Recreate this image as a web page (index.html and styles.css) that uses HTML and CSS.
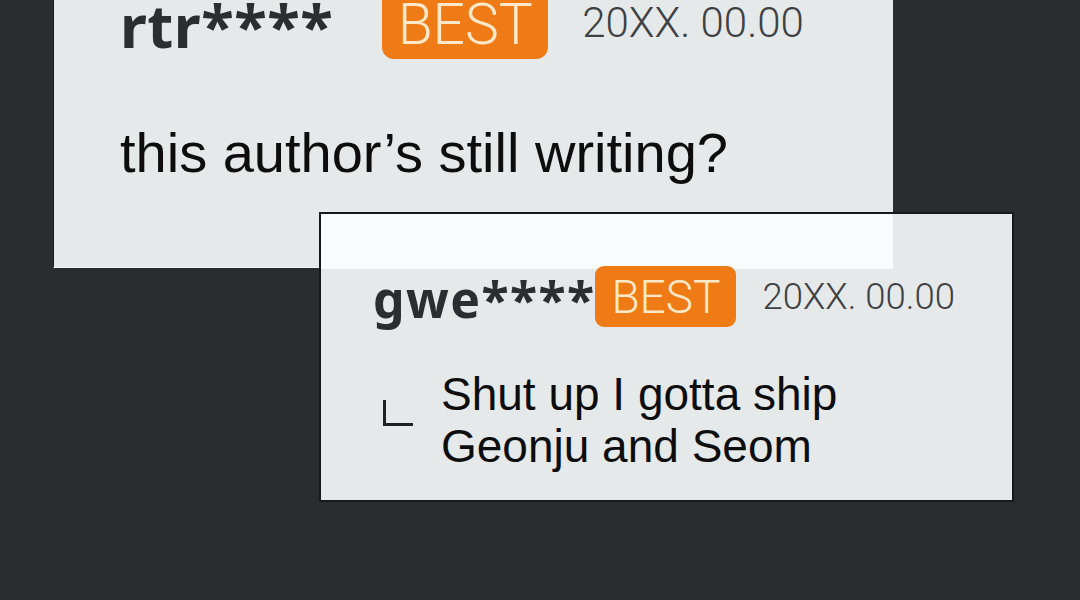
FILE: index.html
```html
<!DOCTYPE html>
<html lang="en">
<head>
<meta charset="utf-8">
<title>Comments</title>
<link rel="stylesheet" href="styles.css">
</head>
<body>
<main class="stage">
  <section class="card card-main">
    <div class="head">
      <span class="name name-lg">rtr****</span>
      <span class="badge badge-lg">BEST</span>
      <span class="date date-lg">20XX. 00.00</span>
    </div>
    <p class="comment">this author’s still writing?</p>
  </section>
  <section class="card card-reply">
    <div class="glare"></div>
    <div class="head head-sm">
      <span class="name name-sm">gwe****</span>
      <span class="badge badge-sm">BEST</span>
      <span class="date date-sm">20XX. 00.00</span>
    </div>
    <div class="reply">
      <span class="corner"></span>
      <p class="reply-text">Shut up I gotta ship<br>Geonju and Seom</p>
    </div>
  </section>
</main>
</body>
</html>
```

FILE: styles.css
```css
html, body {
  margin: 0;
  padding: 0;
  background: #2a2d30;
  height: 100%;
  overflow: hidden;
}

.stage {
  padding-left: 53px;
  display: flex;
  flex-direction: column;
  align-items: flex-start;
}

.card {
  background: #e6e9ea;
  box-sizing: border-box;
}

.card-main {
  margin-top: -20px;
  width: 840px;
  height: 288px;
  border-left: 1px solid #1b1d1f;
  border-bottom: 1px solid #f2f4f5;
  padding-left: 66px;
}

.head {
  display: flex;
  align-items: flex-start;
  height: 79px;
}

.name {
  font-family: "Noto Sans", "DejaVu Sans", sans-serif;
  font-weight: 700;
  color: #2b2e30;
  letter-spacing: 0.5px;
}

.name-lg {
  font-size: 60px;
  line-height: 60px;
  margin-top: 15px;
}

.badge {
  display: flex;
  align-items: center;
  background: #ee7b16;
  color: #fde8c8;
  font-family: "Roboto", "Liberation Sans", sans-serif;
  font-weight: 300;
  line-height: 1;
  box-sizing: border-box;
}

.badge-lg {
  margin-top: 9px;
  margin-left: 49px;
  height: 70px;
  width: 166px;
  justify-content: center;
  font-size: 57px;
  border-radius: 0 0 12px 12px;
}

.date {
  font-family: "Roboto", "Liberation Sans", sans-serif;
  font-weight: 300;
  color: #3e4143;
}

.date-lg {
  font-size: 42px;
  line-height: 42px;
  margin-top: 22px;
  margin-left: 34px;
}

.comment {
  margin: 66px 0 0;
  font-family: "Liberation Sans", Arial, sans-serif;
  font-size: 56px;
  line-height: 56px;
  color: #0d0d0d;
}

.card-reply {
  position: relative;
  margin-top: -56px;
  margin-left: 266px;
  width: 695px;
  height: 290px;
  border: 2px solid #17191b;
  padding-left: 52px;
}

.glare {
  position: absolute;
  left: 0;
  top: 0;
  width: 572px;
  height: 55px;
  background: #f9fcfd;
}

.head-sm {
  position: relative;
  margin-top: 52px;
  height: 61px;
}

.name-sm {
  font-size: 50px;
  line-height: 50px;
  margin-top: 8px;
  letter-spacing: 1.4px;
}

.badge-sm {
  height: 61px;
  width: 141px;
  justify-content: center;
  font-size: 46px;
  border-radius: 9px;
}

.date-sm {
  font-size: 36.5px;
  line-height: 38px;
  margin-top: 12px;
  margin-left: 26px;
}

.reply {
  display: flex;
  align-items: flex-start;
  margin-top: 41px;
  padding-left: 10px;
}

.corner {
  width: 27px;
  height: 23px;
  margin-top: 32px;
  border-left: 3px solid #1f2123;
  border-bottom: 3px solid #1f2123;
  flex: none;
}

.reply-text {
  margin: 0 0 0 28px;
  font-family: "Liberation Sans", Arial, sans-serif;
  font-size: 46px;
  line-height: 52px;
  color: #0d0d0d;
}
```
